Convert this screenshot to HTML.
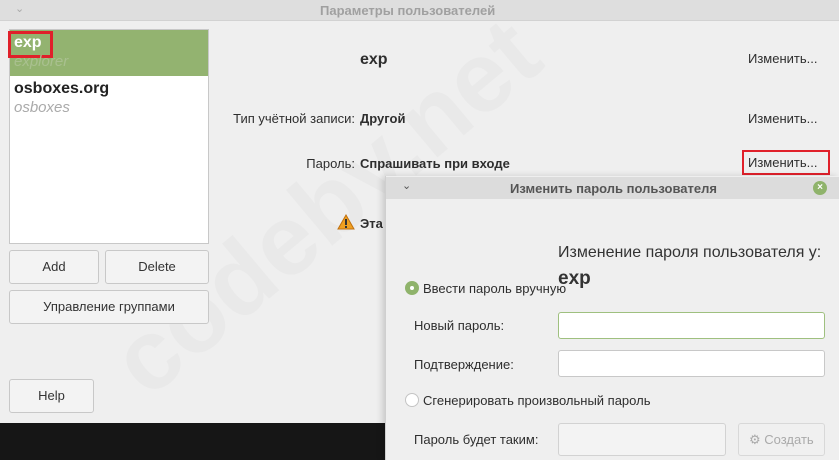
<!DOCTYPE html>
<html><head><meta charset="utf-8"><style>
*{box-sizing:border-box;margin:0;padding:0}
body{width:839px;height:460px;overflow:hidden;background:#161616;font-family:"Liberation Sans","DejaVu Sans",sans-serif;font-size:13px;color:#2e2e2e;position:relative}
.abs{position:absolute}
.btn{position:absolute;border:1px solid #c8c8c8;border-radius:3px;background:#f3f3f3;text-align:center;font-size:13px;color:#333}
.r{position:absolute;text-align:right;font-size:13px}
.b{font-weight:bold}
</style></head><body>
<div class="abs" style="left:0;top:0;width:839px;height:423px;background:#efefef"></div>
<div class="abs" style="left:0;top:0;width:839px;height:21px;background:#dedede;border-bottom:1px solid #d2d2d2"></div>
<div class="abs" style="left:15px;top:2px;color:#aaa;font-size:11px">⌄</div>
<div class="abs" style="left:320px;top:3px;color:#a0a0a0;font-size:13px;font-weight:bold">Параметры пользователей</div>
<div class="abs" style="left:165px;top:300px;font-size:100px;font-weight:bold;color:rgba(0,0,0,0.025);transform:rotate(-40deg);transform-origin:left bottom;white-space:nowrap;line-height:120px">codeby.net</div>
<div class="abs" style="left:9px;top:29px;width:200px;height:215px;background:#fff;border:1px solid #c8c8c8"></div>
<div class="abs" style="left:10px;top:30px;width:198px;height:46px;background:#93b370"></div>
<div class="abs" style="left:8px;top:31px;width:45px;height:27px;border:3px solid #e0202a"></div>
<div class="abs b" style="left:14px;top:34px;color:#fff;font-size:16px">exp</div>
<div class="abs" style="left:14px;top:53px;color:#a9c08f;font-size:15px;font-style:italic">explorer</div>
<div class="abs b" style="left:14px;top:80px;color:#222;font-size:16px">osboxes.org</div>
<div class="abs" style="left:14px;top:99px;color:#aaa;font-size:15px;font-style:italic">osboxes</div>
<div class="btn" style="left:9px;top:250px;width:90px;height:34px;line-height:32px">Add</div>
<div class="btn" style="left:105px;top:250px;width:104px;height:34px;line-height:32px">Delete</div>
<div class="btn" style="left:9px;top:290px;width:200px;height:34px;line-height:32px">Управление группами</div>
<div class="btn" style="left:9px;top:379px;width:85px;height:34px;line-height:32px">Help</div>
<div class="abs b" style="left:360px;top:51px;font-size:16px">exp</div>
<div class="abs" style="left:748px;top:51px">Изменить...</div>
<div class="r" style="left:200px;width:155px;top:111px">Тип учётной записи:</div>
<div class="abs b" style="left:360px;top:111px">Другой</div>
<div class="abs" style="left:748px;top:111px">Изменить...</div>
<div class="r" style="left:200px;width:155px;top:156px">Пароль:</div>
<div class="abs b" style="left:360px;top:156px">Спрашивать при входе</div>
<div class="abs" style="left:742px;top:150px;width:88px;height:25px;border:2px solid #e0202a"></div>
<div class="abs" style="left:748px;top:155px">Изменить...</div>
<svg class="abs" style="left:337px;top:214px" width="18" height="16"><path d="M9 1 L17 15 L1 15Z" fill="#f0a020" stroke="#c07010"/><rect x="8" y="5" width="2" height="6" fill="#333"/><rect x="8" y="12" width="2" height="2" fill="#333"/></svg>
<div class="abs b" style="left:360px;top:216px">Эта</div>
<!-- dialog -->
<div class="abs" style="left:385px;top:176px;width:454px;height:284px;background:#efefef;border-left:1px solid #cfcfcf;box-shadow:-3px 0 6px rgba(0,0,0,0.15)"></div>
<div class="abs" style="left:386px;top:177px;width:453px;height:22px;background:#dcdcdc"></div>
<div class="abs" style="left:402px;top:179px;color:#555;font-size:11px">⌄</div>
<div class="abs b" style="left:510px;top:181px;color:#555;font-size:13px">Изменить пароль пользователя</div>
<div class="abs" style="left:813px;top:181px;width:14px;height:14px;border-radius:50%;background:#8fb36b;color:#fff;font-size:10px;line-height:14px;text-align:center;font-weight:bold">×</div>
<div class="abs" style="left:558px;top:244px;font-size:16px;color:#333">Изменение пароля пользователя у:</div>
<div class="abs b" style="left:558px;top:268px;font-size:19px;color:#333">exp</div>
<div class="abs" style="left:405px;top:281px;width:14px;height:14px;border-radius:50%;background:#8fb36b"><div style="margin:5px;width:4px;height:4px;border-radius:50%;background:#fff"></div></div>
<div class="abs" style="left:423px;top:281px">Ввести пароль вручную</div>
<div class="abs" style="left:414px;top:318px">Новый пароль:</div>
<div class="abs" style="left:558px;top:312px;width:267px;height:27px;background:#fff;border:1px solid #9fc07f;border-radius:3px"></div>
<div class="abs" style="left:414px;top:357px">Подтверждение:</div>
<div class="abs" style="left:558px;top:350px;width:267px;height:27px;background:#fff;border:1px solid #c8c8c8;border-radius:3px"></div>
<div class="abs" style="left:405px;top:393px;width:14px;height:14px;border-radius:50%;background:#fff;border:1px solid #c4c4c4"></div>
<div class="abs" style="left:423px;top:393px">Сгенерировать произвольный пароль</div>
<div class="abs" style="left:414px;top:432px">Пароль будет таким:</div>
<div class="abs" style="left:558px;top:423px;width:168px;height:33px;background:#f3f3f3;border:1px solid #d2d2d2;border-radius:3px"></div>
<div class="abs" style="left:738px;top:423px;width:87px;height:33px;background:#f0f0f0;border:1px solid #d8d8d8;border-radius:3px;color:#aaa;line-height:31px;padding-left:10px">⚙ Создать</div>
</body></html>
